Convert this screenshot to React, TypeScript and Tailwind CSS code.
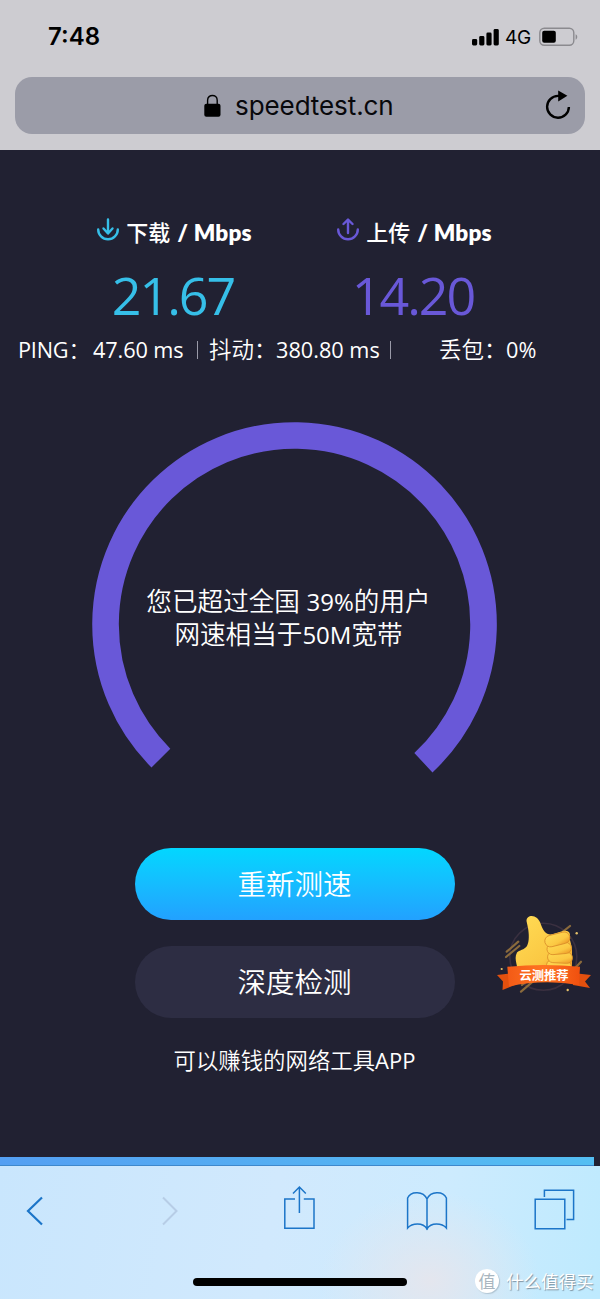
import { useState } from "react";

const PURPLE = "#6958d8";
const CYAN = "#36bfe8";

interface Metric {
  id: string;
  label: string;
  value: string;
  color: string;
  arrow: string;
}

const metrics: Metric[] = [
  { id: "down", label: "下载", value: "21.67", color: CYAN, arrow: "M11 1.5V15M6.5 10.5L11 15.5L15.5 10.5" },
  { id: "up", label: "上传", value: "14.20", color: PURPLE, arrow: "M11 15V2M6.5 6L11 1.5L15.5 6" },
];

function StatusBar() {
  return (
    <div className="flex h-[77px] items-center justify-between pl-[48px] pr-[22px] pb-[3px]">
      <span className="font-['Inter'] text-[24px] leading-none font-semibold">7:48</span>
      <div className="flex items-center">
        <svg width="28" height="18" viewBox="0 0 28 18" aria-label="Signal">
          <rect x="0" y="11" width="5.2" height="6.5" rx="1.4" />
          <rect x="7.2" y="8" width="5.2" height="9.5" rx="1.4" />
          <rect x="14.4" y="4.5" width="5.2" height="13" rx="1.4" />
          <rect x="21.6" y="1" width="5.2" height="16.5" rx="1.4" />
        </svg>
        <span className="ml-[5px] w-[29px] font-['Inter'] text-[19px] leading-none font-normal tracking-[-0.2px]">4G</span>
        <svg className="ml-[5px]" width="39" height="20" viewBox="0 0 39 20" aria-label="Battery">
          <rect x="0.8" y="1.3" width="34" height="17" rx="4.5" fill="none" stroke="#8b8a8f" strokeWidth="1.4" />
          <rect x="3.2" y="3.8" width="13.6" height="12" rx="2" />
          <path d="M36.6 7.3C38.8 8 38.8 12 36.6 12.7Z" fill="#8b8a8f" />
        </svg>
      </div>
    </div>
  );
}

function AddressBar() {
  return (
    <div className="mx-[15px] flex h-[57px] items-center rounded-[17px] bg-[#9b9ca8]">
      <div className="flex flex-1 items-center pl-[189px]">
        <svg width="17" height="23" viewBox="0 0 17 23">
          <path d="M3.6 11V6.3C3.6 -0.2 13.2 -0.2 13.2 6.3V11" fill="none" stroke="#000" strokeWidth="1.4" />
          <rect x="0.3" y="9.8" width="16.2" height="13" rx="2" />
        </svg>
        <span className="ml-[14px] font-['Inter'] text-[26px] leading-none tracking-[-0.08px] text-[#08080c]">speedtest.cn</span>
      </div>
      <button className="mr-[14px] mb-[2px]" aria-label="Reload">
        <svg width="26" height="30" viewBox="0 0 26 30">
          <path d="M14.8 5.9H13A10.9 10.9 0 1 0 23.9 17" fill="none" stroke="#000" strokeWidth="2.4" />
          <path d="M13.2 0.6V11.4L22.4 5.8Z" />
        </svg>
      </button>
    </div>
  );
}

function Gauge() {
  return (
    <div className="mx-auto mt-[55px] grid h-[404px] w-[405px] place-items-center">
      <svg className="col-start-1 row-start-1" width="405" height="404" viewBox="0 0 405 404">
        <path d="M68.9 336.1A189 189 0 1 1 331.4 340.7" fill="none" stroke={PURPLE} strokeWidth="26.6" />
      </svg>
      <div className="col-start-1 row-start-1 mb-[13px] mr-[12px] text-center text-[25.6px] leading-[33px] font-[350] whitespace-nowrap">
        <p>
          您已超过全国 <span className="text-[24px] font-normal">39%</span>的用户
        </p>
        <p>
          网速相当于<span className="text-[24px] font-normal">50M</span>宽带
        </p>
      </div>
    </div>
  );
}

function RecommendBadge() {
  return (
    <svg className="absolute top-[758px] left-[495px]" width="98" height="98" viewBox="0 0 98 98">
      <defs>
        <linearGradient id="thumb" x1="0" y1="0" x2="0.8" y2="1">
          <stop offset="0" stopColor="#ffdc55" />
          <stop offset="0.7" stopColor="#fbc843" />
          <stop offset="1" stopColor="#ee9f2b" />
        </linearGradient>
        <linearGradient id="ribbon" x1="0" y1="0" x2="1" y2="0">
          <stop offset="0" stopColor="#f35a16" />
          <stop offset="0.5" stopColor="#ff7422" />
          <stop offset="1" stopColor="#f0500f" />
        </linearGradient>
      </defs>
      <circle cx="48.3" cy="48.7" r="33.5" fill="none" stroke="#3a3040" strokeWidth="1.6" />
      <g stroke="#8a6a3c" strokeWidth="2.2" strokeLinecap="round">
        <path d="M11.7 43.7L23.3 33.7M11 49L24.3 38M68 23.7L75 18M76.7 63.7L86 53.7M26 83.7L37.7 73.7M27 77L32 73" />
      </g>
      <g fill="#e5c16a">
        <circle cx="81.7" cy="25.3" r="1.2" />
        <circle cx="6.7" cy="61" r="1.1" />
        <circle cx="72.7" cy="82" r="1.2" />
      </g>
      <path
        d="M31.5 13C31.5 7.5 38 6.5 42 10C46 13.5 46 19 49.5 23.5C51.5 26 55 27 58 26L68 23C74 22 76 25 74.5 30L77 40V62L68 66H21.5C22.5 63 22.5 60 21.5 56C20.5 52 20 48 22 44.5C24 42 29.5 42 32 38C34.5 33 34 26 33 20Z"
        fill="url(#thumb)"
      />
      <g fill="url(#thumb)" stroke="#d98c28" strokeWidth="0.8">
        <rect x="51.5" y="52.5" width="25" height="11" rx="5.5" transform="rotate(6 64 58)" />
        <rect x="52.5" y="44" width="25" height="11" rx="5.5" transform="rotate(3 65 50)" />
        <rect x="52" y="35" width="24.5" height="11" rx="5.5" transform="rotate(-5 65 41)" />
        <rect x="49.5" y="25.5" width="25.5" height="11.5" rx="5.7" transform="rotate(-14 63 31)" />
      </g>
      <path d="M2 67L20 65V77L7.5 82L8 73.5ZM96 67L78 65V77L95 80L90 73.5Z" fill="#e3500e" />
      <path d="M12.3 58.7Q48.5 55.5 85 58.7L84 77Q48.5 71 14 78.5Z" fill="url(#ribbon)" />
      <text x="49" y="71.5" textAnchor="middle" fill="#fff" className="font-['Noto_Sans_CJK_SC'] text-[12.3px] font-bold">
        云测推荐
      </text>
    </svg>
  );
}

function Toolbar() {
  return (
    <nav className="flex h-[133px] flex-col bg-[radial-gradient(ellipse_110px_90px_at_430px_115px,#e4e6ee_0%,#e4e6ee00_100%),linear-gradient(100deg,#c9e6fd_0%,#d1e9fd_45%,#cdebfe_72%,#beeafe_100%)]">
      <div className="flex h-[86px] items-center pt-[4px] pl-[26px] text-[#1c75c8]">
        <svg width="18" height="30" viewBox="0 0 18 30" fill="none" stroke="currentColor" strokeWidth="2.2">
          <path d="M16 1.5L2 15L16 28.5" />
        </svg>
        <svg className="ml-[117px]" width="18" height="30" viewBox="0 0 18 30" fill="none" stroke="#b7cde6" strokeWidth="2">
          <path d="M2 1.5L15.5 15L2 28.5" />
        </svg>
        <svg className="-mt-[8px] ml-[104px]" width="33" height="45" viewBox="0 0 33 45" fill="none" stroke="currentColor" strokeWidth="1.5">
          <path d="M12 14H1.8V43.2H31V14H20.8" />
          <path d="M16.4 28V2M10 8.5L16.4 2L22.8 8.5" />
        </svg>
        <svg className="ml-[90px]" width="42" height="41" viewBox="0 0 42 41" fill="none" stroke="currentColor" strokeWidth="1.5">
          <path d="M21 8C17.5 0 5 -0.5 1.6 7V37C6 32 17 31 21 38C25 31 36 32 40.4 37V7C37 -0.5 24.5 0 21 8ZM21 8V39" />
        </svg>
        <svg className="-mt-[3px] ml-[86px]" width="41" height="41" viewBox="0 0 41 41" fill="none" stroke="currentColor" strokeWidth="1.5">
          <path d="M1.2 10.2H30.8V39.8H1.2Z" />
          <path d="M10.4 8V1.2H39.6V30.5H32.5" />
        </svg>
      </div>
      <div className="flex flex-1 items-start">
        <div className="mt-[26px] ml-[193px] h-[8px] w-[214px] rounded-full bg-black" />
        <div className="mt-[17px] ml-[68px] flex items-center text-white">
          <span className="grid size-[24px] place-items-center rounded-full bg-white text-[17px] leading-none text-[#a9b6c0] shadow-[1px_1px_1px_#8fa3b088]">值</span>
          <span className="ml-[7px] text-[17.5px] leading-[24px] whitespace-nowrap [text-shadow:1px_1px_1px_#7d919f]">什么值得买</span>
        </div>
      </div>
    </nav>
  );
}

export default function App() {
  const [testing, setTesting] = useState(false);

  return (
    <div className="flex h-[1299px] w-[600px] flex-col overflow-hidden bg-[#212132] font-['Open_Sans','Noto_Sans_CJK_SC',sans-serif] text-white">
      <header className="h-[150px] shrink-0 bg-[#cdccd1] text-black">
        <StatusBar />
        <AddressBar />
      </header>

      <main className="relative h-[1007px] shrink-0 pr-[11px]">
        <div className="flex justify-center pt-[67px]">
          {metrics.map((m) => (
            <section key={m.id} className="flex w-[240px] flex-col items-center">
              <h2 className="flex h-[32px] items-center font-['Lato','Noto_Sans_CJK_SC',sans-serif] text-[22px] leading-none font-bold">
                <svg className="mr-[7px] mb-[7px]" width="22" height="23" viewBox="0 0 22 23" fill="none" stroke={m.color} strokeWidth="2.4" strokeLinecap="round" strokeLinejoin="round">
                  <path d={m.arrow} />
                  <path d="M1.2 11.5A9.8 9.8 0 0 0 20.8 11.5" />
                </svg>
                <span className="font-medium">{m.label}</span>
                <span className="ml-[7px] text-[22.5px] font-extrabold tracking-[0.2px] whitespace-pre">/ Mbps</span>
              </h2>
              <div className="mt-[15px] h-[62px] pr-[3px] text-[52px] leading-[62px] tracking-[-2px]" style={{ color: m.color }}>
                {m.value}
              </div>
            </section>
          ))}
        </div>

        <div className="mt-[7px] flex h-[34px] items-center pl-[18px] text-[21.7px] leading-none whitespace-nowrap">
          <span className="w-[75px] tracking-[-0.2px]">
            PING<span className="font-[350]">：</span>
          </span>
          <span className="w-[104px] tracking-[-0.1px]">47.60 ms</span>
          <span className="h-[18px] w-px bg-[#9a9aa8]" />
          <span className="ml-[11px] w-[67px] text-[22.5px] font-[350]">抖动：</span>
          <span className="w-[114px]">380.80 ms</span>
          <span className="h-[18px] w-px bg-[#9a9aa8]" />
          <span className="ml-[48px] w-[67px] text-[22.5px] font-[350]">丢包：</span>
          <span>0%</span>
        </div>

        <Gauge />

        <div className="mt-[22px] flex flex-col items-center">
          <button onClick={() => setTesting(!testing)} className="h-[72px] w-[320px] rounded-full bg-linear-to-b from-[#02d7ff] to-[#22a1ff] text-[28.5px] leading-none font-[350]">
            重新测速
          </button>
          <button className="mt-[26px] h-[72px] w-[320px] rounded-full bg-[#2d2d43] text-[28.5px] leading-none font-[350]">深度检测</button>
          <a className="mt-[26px] text-[22.4px] leading-[32px] font-[350]">
            可以赚钱的网络工具<span className="text-[22px] font-normal">APP</span>
          </a>
        </div>

        <RecommendBadge />
      </main>

      <div className="h-[9px] w-[594px] shrink-0 border-b border-[#3e88cc] bg-linear-to-r from-[#549ff2] to-[#54bef2]" />
      <Toolbar />
    </div>
  );
}
